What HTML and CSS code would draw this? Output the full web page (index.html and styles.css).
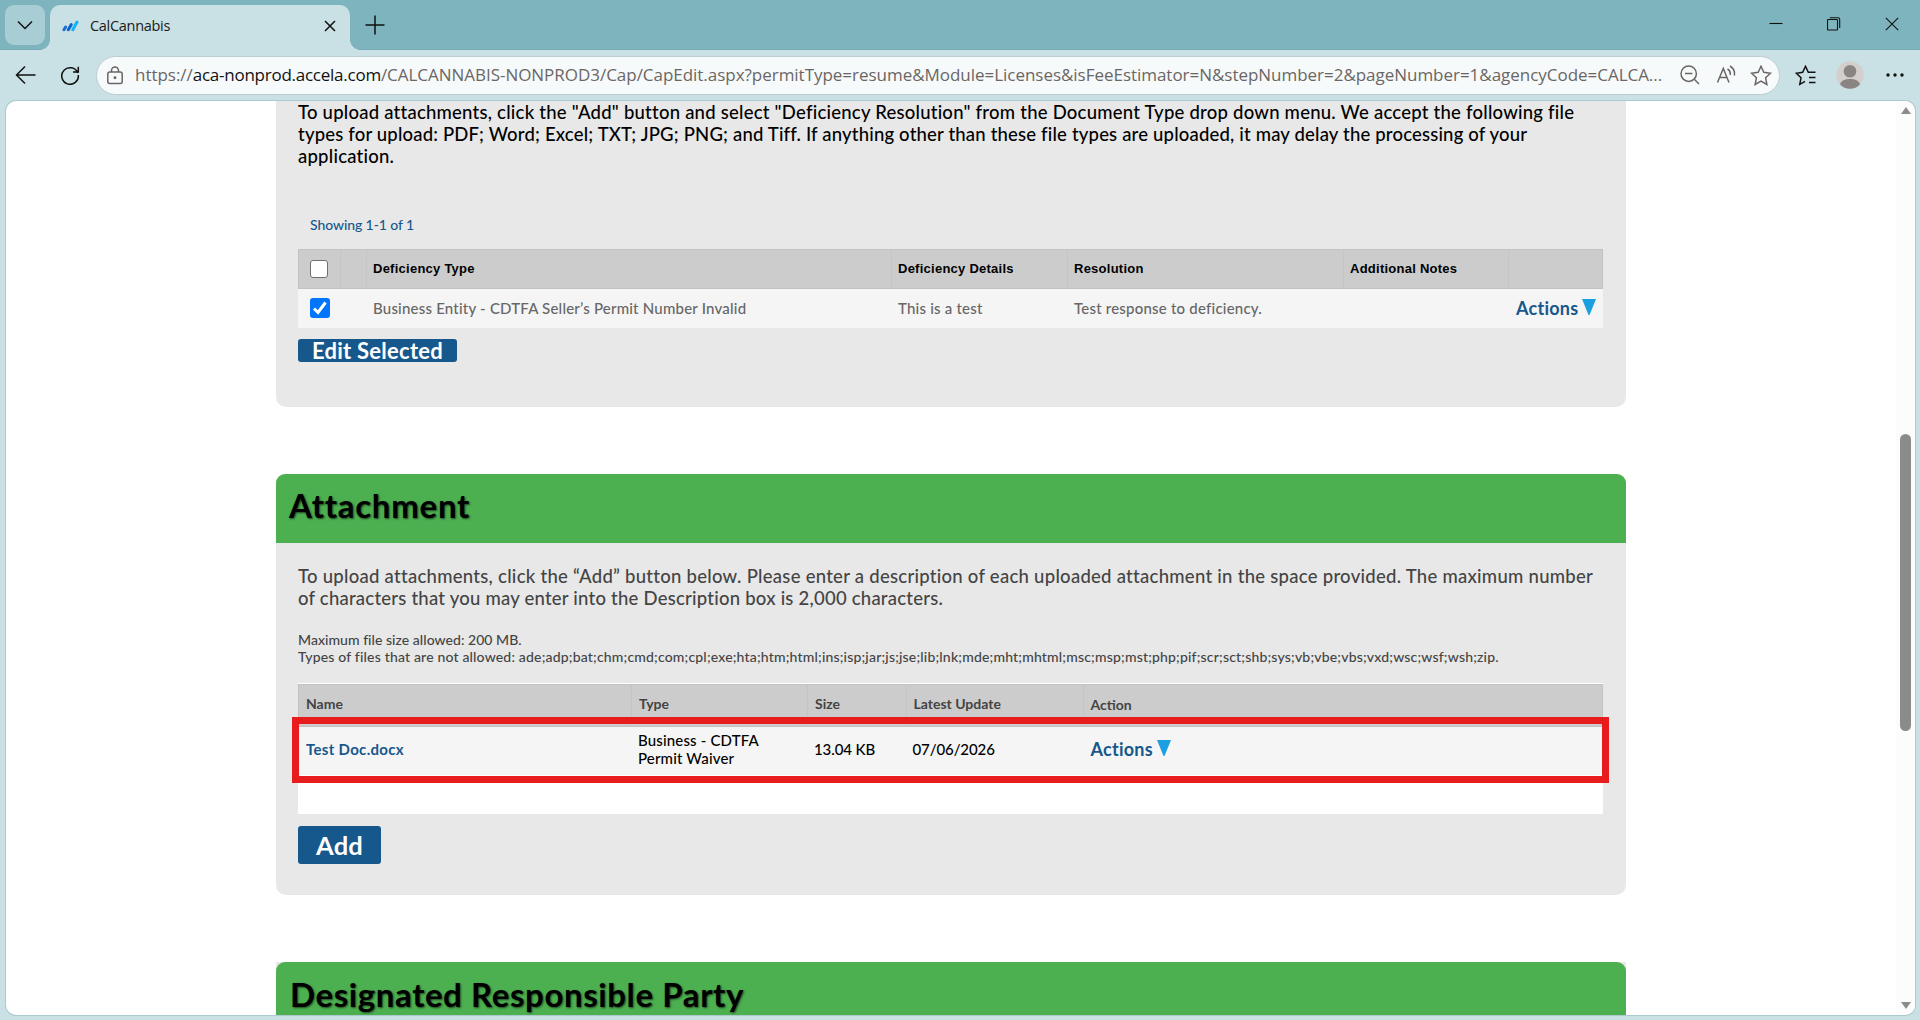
FILE: index.html
```html
<!DOCTYPE html>
<html lang="en">
<head>
<meta charset="utf-8">
<title>CalCannabis</title>
<link rel="stylesheet" href="styles.css">
</head>
<body>
<div class="tabstrip">
  <div class="tab-menu"><svg width="16" height="10" viewBox="0 0 16 10"><path d="M1 1.5 8 8.5 15 1.5"/></svg></div>
  <div class="tab">
    <svg class="favicon" width="17" height="12" viewBox="0 0 17 12"><path stroke="#1a6fd0" d="M2 9.8 3.6 7"/><path stroke="#0d63c8" d="M6.3 9.8 9.3 4.6"/><path stroke="#12b2fb" d="M10.8 9.8 15 2"/></svg>
    <span class="tab-title">CalCannabis</span>
    <svg class="tab-close" width="12" height="12" viewBox="0 0 12 12"><path d="M1 1 11 11M11 1 1 11"/></svg>
  </div>
  <svg class="new-tab" width="20" height="20" viewBox="0 0 20 20"><path d="M10 .5V19.5M.5 10H19.5"/></svg>
  <div class="window-buttons">
    <svg width="14" height="14" viewBox="0 0 14 14"><path d="M.5 6.5H13.5"/></svg>
    <svg width="14" height="14" viewBox="0 0 14 14"><path d="M.5 3.2Q.5 2.5 1.2 2.5H9.8Q10.5 2.5 10.5 3.2V12.3Q10.5 13 9.8 13H1.2Q.5 13 .5 12.3ZM2.8 .7H11Q12.7 .7 12.7 2.4V11"/></svg>
    <svg width="14" height="14" viewBox="0 0 14 14"><path d="M.8 .8 13.2 13.2M13.2 .8 .8 13.2"/></svg>
  </div>
</div>
<div class="toolbar">
  <svg class="back" width="22" height="20" viewBox="0 0 22 20"><path d="M10 1.5 1.5 10 10 18.5M1.5 10H20.5"/></svg>
  <svg class="reload" width="20" height="20" viewBox="0 0 20 20"><path d="M17.8 8A8.3 8.3 0 1 0 18.3 10M18.3 1.8V7H13"/></svg>
  <div class="address">
    <svg class="lock" width="18" height="19" viewBox="0 0 18 19"><rect x="1.8" y="6" width="14.4" height="11.5" rx="2"/><path d="M5.5 6V4.5a3.5 3.5 0 0 1 7 0V6"/><circle cx="9" cy="11.7" r=".7"/></svg>
    <span class="url">https://<b>aca-nonprod.accela.com</b>/CALCANNABIS-NONPROD3/Cap/CapEdit.aspx?permitType=resume&amp;Module=Licenses&amp;isFeeEstimator=N&amp;stepNumber=2&amp;pageNumber=1&amp;agencyCode=CALCA...</span>
    <svg class="zoom-out" width="20" height="20" viewBox="0 0 20 20"><circle cx="8.7" cy="8.7" r="7.7"/><path d="M14.3 14.3 19 19M5 8.5H12.4"/></svg>
    <svg class="read" width="20" height="20" viewBox="0 0 20 20"><path d="M1.5 17.5 7.3 3.5 13 17.5M3.5 12.5H11M11.5 4Q14.8 6 14.2 10M14 1Q19.5 4.5 18.3 10.5"/></svg>
    <svg class="star" width="22" height="21" viewBox="0 0 22 21"><path d="M11 1.3 13.8 7.3 20.5 8.2 15.6 12.8 16.9 19.5 11 16.2 5.1 19.5 6.4 12.8 1.5 8.2 8.2 7.3Z"/></svg>
  </div>
  <svg class="favs" width="22" height="21" viewBox="0 0 22 21"><path d="M13.5 7.3H13.3L10.5 1.3 7.7 7.3 1.3 8.2 6 12.8 4.8 19.3 10 16.4M13.5 7.3H20.5M14 12.5H20.5M14 17.5H20.5"/></svg>
  <svg class="avatar" width="28" height="28" viewBox="0 0 28 28"><circle cx="14" cy="14" r="13.7" fill="#d3cfcc"/><circle cx="14" cy="10.3" r="6.3" fill="#8a8582"/><path d="M4 23.5C5 19.5 9 18 14 18S23 19.5 24 23.5A13.7 13.7 0 0 1 4 23.5Z" fill="#8a8582"/></svg>
  <svg class="more" width="18" height="4" viewBox="0 0 18 4"><circle cx="2" cy="2" r="1.7"/><circle cx="9" cy="2" r="1.7"/><circle cx="16" cy="2" r="1.7"/></svg>
</div>
<div class="viewport">
  <main class="page">
    <section class="panel deficiency">
      <p class="intro dark">To upload attachments, click the "Add" button and select "Deficiency Resolution" from the Document Type drop down menu. We accept the following file<br><span class="tight">types for upload: PDF; Word; Excel; TXT; JPG; PNG; and Tiff. If anything other than these file types are uploaded, it may delay the processing of your</span><br>application.</p>
      <p class="showing">Showing 1-1 of 1</p>
      <div class="grid def-head">
        <div><i class="box"></i></div><div></div><div>Deficiency Type</div><div>Deficiency Details</div><div>Resolution</div><div>Additional Notes</div><div></div>
      </div>
      <div class="grid def-row">
        <div><i class="box checked"><svg width="20" height="20" viewBox="0 0 20 20"><path d="M4 10.5 8 14.5 15.5 4.5"/></svg></i></div><div></div><div>Business Entity - CDTFA Seller’s Permit Number Invalid</div><div>This is a test</div><div>Test response to deficiency.</div><div></div><div><span class="actions">Actions<svg width="14" height="16" viewBox="0 0 14 16"><path d="M0 0H14L7.5 16H6.5Z"/></svg></span></div>
      </div>
      <button class="edit">Edit Selected</button>
    </section>
    <section class="panel attachment">
      <h2 class="short">Attachment</h2>
      <p class="intro"><span class="wide">To upload attachments, click the “Add” button below. Please enter a description of each uploaded attachment in the space provided. The maximum number</span><br>of characters that you may enter into the Description box is 2,000 characters.</p>
      <p class="limits">Maximum file size allowed: 200 MB.<br><span class="types">Types of files that are not allowed: ade;adp;bat;chm;cmd;com;cpl;exe;hta;htm;html;ins;isp;jar;js;jse;lib;lnk;mde;mht;mhtml;msc;msp;mst;php;pif;scr;sct;shb;sys;vb;vbe;vbs;vxd;wsc;wsf;wsh;zip.</span></p>
      <div class="files">
        <div class="grid file-head"><div>Name</div><div>Type</div><div>Size</div><div>Latest Update</div><div class="low">Action</div></div>
        <div class="grid file-row"><div><a>Test Doc.docx</a></div><div><span class="kind">Business - CDTFA<br>Permit Waiver</span></div><div><span class="num">13.04 KB</span></div><div><span class="num">07/06/2026</span></div><div><span class="actions">Actions<svg width="14" height="16" viewBox="0 0 14 16"><path d="M0 0H14L7.5 16H6.5Z"/></svg></span></div></div>
        <div class="highlight"></div>
      </div>
      <button class="add">Add</button>
    </section>
    <section class="panel party">
      <h2>Designated Responsible Party</h2>
    </section>
  </main>
  <div class="scrollbar"><i class="up"></i><i class="thumb"></i><i class="down"></i></div>
</div>
</body>
</html>
```

FILE: styles.css
```css
* { box-sizing: border-box; }
body { margin: 0; width: 1920px; height: 1020px; overflow: hidden; display: flex; flex-direction: column; background: #c9e0e4; font-family: Lato, "Liberation Sans", sans-serif; font-weight: 500; color: #000; }
svg { display: block; flex: none; fill: none; stroke: #111; stroke-width: 1.5; }
p, h2 { margin: 0; }
button { border: 0; padding: 0; font-family: inherit; cursor: pointer; }

/* Browser tabs */
.tabstrip { height: 50px; flex: none; display: flex; align-items: flex-start; background: #7eb4be; border-bottom: 1px solid #75abb5; }
.tab-menu { width: 40px; height: 40px; margin: 5px 5px 0; border-radius: 9px; background: #a8cdd4; display: flex; align-items: center; justify-content: center; }
.tab { position: relative; width: 300px; height: 45px; margin-top: 5px; padding: 0 14px 4px 12px; border-radius: 10px 10px 0 0; background: #c9e0e4; display: flex; align-items: center; }
.tab::before, .tab::after { content: ""; position: absolute; bottom: 0; width: 10px; height: 10px; }
.tab::before { left: -10px; background: radial-gradient(circle at 0 0, transparent 9.5px, #c9e0e4 10px); }
.tab::after { right: -10px; background: radial-gradient(circle at 100% 0, transparent 9.5px, #c9e0e4 10px); }
.favicon { stroke-width: 3; stroke-linecap: round; }
.tab-title { margin-left: 11px; font: 400 14.5px/20px "Open Sans", sans-serif; letter-spacing: -.3px; color: #1b1b1b; }
.tab-close { margin-left: auto; }
.new-tab { margin: 15px 0 0 15px; }
.window-buttons { margin: 17px 21px 0 auto; display: flex; gap: 44px; }
.window-buttons svg { stroke-width: 1.1; }

/* Address bar */
.toolbar { height: 51px; flex: none; display: flex; align-items: center; padding: 0 16px 1px 15px; }
.reload { margin-left: 23px; }
.address { width: 1684px; height: 39px; margin-left: 16px; padding: 0 8px 0 9px; border: 1px solid #bccdd1; border-radius: 20px; background: #f6fafb; display: flex; align-items: center; }
.address svg { stroke: #6b6664; }
.url { margin-left: 11px; width: 1528px; font: 400 17px/24px "Open Sans", sans-serif; color: #6b6664; white-space: nowrap; letter-spacing: -.03px; padding-bottom: 1px; }
.url b { font-weight: 400; color: #111; letter-spacing: -.25px; }
.zoom-out { margin-left: 18px; }
.address .read { margin-left: 16px; }
.star { margin-left: 14px; }
.favs { margin-left: 15px; }
.avatar { margin-left: 19px; stroke: none; }
.more { margin-left: 22px; fill: #111; stroke: none; }

/* Page area */
.viewport { width: 1909px; height: 914px; margin-left: 6px; border-radius: 10px; background: #fff; box-shadow: 0 0 0 1px #adc8ce; overflow: hidden; display: flex; justify-content: space-between; }
.page { width: 1350px; margin-left: 270px; }
.panel { background: #e8e8e8; border-radius: 0 0 10px 10px; padding: 0 23px 0 22px; }
.intro { font-size: 18.5px; line-height: 22px; letter-spacing: .23px; color: #444; white-space: nowrap; }
.intro .tight { letter-spacing: .18px; }
.intro .wide { letter-spacing: .27px; }
.intro.dark { color: #000; }
.grid { display: grid; }
.grid > div { display: flex; align-items: center; }
.actions { display: flex; align-items: center; gap: 4px; font-size: 18px; letter-spacing: .26px; color: #17588c; font-weight: 700; }
.actions svg { fill: #1a9fe0; stroke: none; margin-top: -2px; }
.edit, .add { display: block; border-radius: 3px; background: #17588c; color: #fff; font-weight: 700; }

/* Deficiency table */
.deficiency { height: 306px; }
.showing { padding: 49px 0 0 12px; font-size: 14px; line-height: 18px; letter-spacing: -.09px; color: #17588c; }
.def-head, .def-row { grid-template-columns: 42px 26px 525px 176px 276px 165px 95px; }
.def-head { height: 40px; margin-top: 15px; background: #ccc; border: 1px solid #c2c2c2; font: 700 13px "Liberation Sans", sans-serif; letter-spacing: .25px; }
.def-head > div { margin-left: -1px; padding: 0 0 1px 6px; }
.def-head > div + div { border-left: 1px solid #c5c5c5; }
.def-row { height: 39px; background: #f5f5f5; font-size: 15px; letter-spacing: .21px; color: #666; }
.def-row > div { padding: 0 0 2px 7px; }
.def-head > div:first-child, .def-row > div:first-child { padding-left: 12px; }
.def-row > div:last-child { padding-left: 8px; }
.box { width: 18px; height: 18px; border: 1px solid #707070; border-radius: 3px; background: #fff; }
.checked { width: 20px; height: 20px; border: 0; background: #0075ff; }
.checked svg { stroke: #fff; stroke-width: 3; }
.edit { width: 159px; height: 23px; margin-top: 11px; font-size: 22px; line-height: 22px; letter-spacing: .25px; }

/* Attachment section */
.attachment { margin-top: 67px; height: 421px; border-radius: 10px; }
h2 { margin: 0 -23px 0 -22px; padding: 13px 0 0 14px; height: 69px; border-radius: 9px 9px 0 0; background: #4caf50; font-size: 33px; line-height: 38px; font-weight: 700; letter-spacing: .6px; text-shadow: 1px 1px 2px rgba(0,0,0,.6); }
h2.short { padding: 12px 0 0 13px; letter-spacing: .74px; }
.attachment .intro { padding-top: 22px; }
.limits { padding-top: 22px; font-size: 14px; line-height: 17px; letter-spacing: .04px; color: #444; white-space: nowrap; }
.limits .types { letter-spacing: .176px; }
.files { position: relative; height: 131px; margin-top: 18px; background: #fff; padding-top: 1px; }
.file-head, .file-row { grid-template-columns: 332px 176px 98.5px 177px 521.5px; }
.file-head { height: 43px; background: #ccc; border: 1px solid #c2c2c2; font-size: 14px; font-weight: 700; color: #444; }
.file-head > div { padding: 0 0 5px 7px; }
.file-head > .low { padding-bottom: 3px; }
.file-head > div + div { border-left: 1px solid #c5c5c5; }
.file-row { height: 48px; background: #f5f5f5; font-size: 15px; letter-spacing: .16px; }
.file-row > div { padding: 0 0 5px 8px; }
.file-row > div:last-child { padding-left: 9px; }
.file-row a { color: #17588c; font-weight: 700; letter-spacing: .31px; }
.file-row .num { letter-spacing: -.1px; }
.kind { line-height: 18px; }
.highlight { position: absolute; left: -6px; top: 34px; width: 1317px; height: 66px; border: 7px solid #e81c1c; }
.add { width: 83px; height: 38px; margin-top: 12px; font-size: 25.5px; line-height: 38px; letter-spacing: .2px; }
.party { margin-top: 67px; }

/* Scrollbar */
.scrollbar { width: 19px; background: #fcfcfc; display: flex; flex-direction: column; align-items: center; }
.up { margin-top: 6px; border: 5px solid transparent; border-top: 0; border-bottom: 7px solid #8b8b8b; }
.thumb { margin-top: 320px; width: 11px; height: 297px; border-radius: 6px; background: #8b8b8b; }
.down { margin-top: auto; margin-bottom: 6px; border: 5px solid transparent; border-bottom: 0; border-top: 7px solid #8b8b8b; }
```
